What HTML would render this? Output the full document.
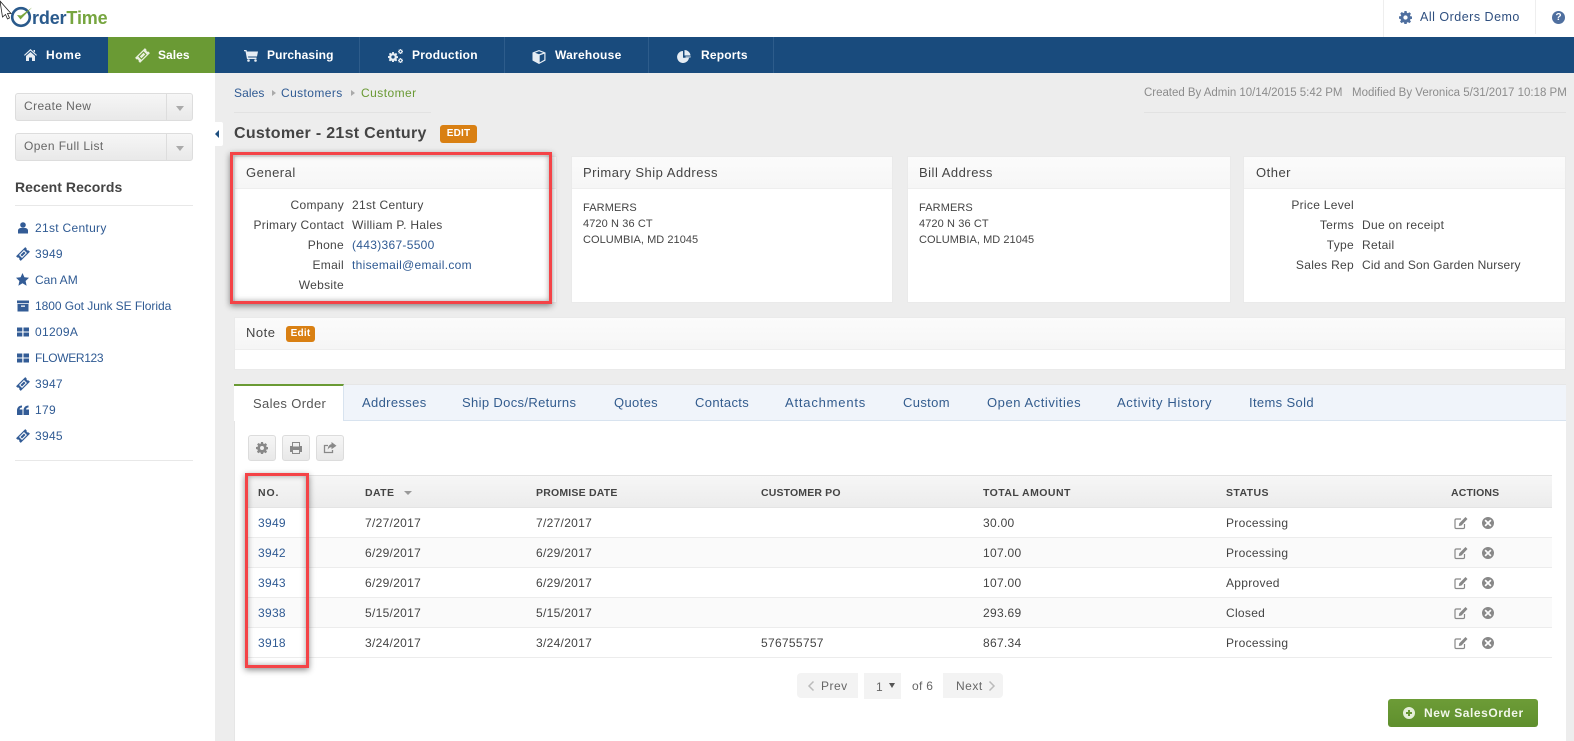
<!DOCTYPE html>
<html lang="en"><head><meta charset="utf-8"><title>Customer - 21st Century</title>
<style>
*{box-sizing:border-box}
html,body{margin:0;padding:0}
body{position:relative;width:1574px;height:741px;overflow:hidden;background:#ededed;font:12px/16px "Liberation Sans",sans-serif;color:#444;letter-spacing:.3px}
.a,.t{position:absolute}
.t{white-space:nowrap}
.r{text-align:right;width:112px}
.l{color:#2f5a93}
.nav{color:#fff;font-weight:bold;font-size:12px;letter-spacing:.55px}
.ico{position:absolute;fill:#335c96}
.wi{fill:#e6edf4}
.sep{position:absolute;top:37px;width:1px;height:36px;background:#2d5c8b}
.panel{position:absolute;top:156px;height:147px;background:#fff;border:1px solid #eaeaea}
.ph{position:absolute;left:0;right:0;top:0;height:32px;background:linear-gradient(#fbfbfb,#f6f6f6);border-bottom:1px solid #eee}
.h{font-size:13px;color:#444;letter-spacing:.5px}
.b{font-size:11px;letter-spacing:.1px;line-height:16px}
.tab{color:#335c8e;font-size:13px;letter-spacing:.35px}
.th{font-weight:bold;font-size:10.5px;color:#444;letter-spacing:.4px}
.rw{position:absolute;left:248px;width:1304px;height:1px;background:#ececec}
.tint{position:absolute;left:248px;width:1304px;height:29px;background:#fafafa}
.tb{position:absolute;top:435px;width:28px;height:26px;border:1px solid #dcdcdc;border-radius:3px;background:linear-gradient(#f6f6f6,#e8e8e8)}
.dd{position:absolute;left:15px;width:178px;height:28px;border:1px solid #ddd;border-radius:3px;background:linear-gradient(#f6f6f6,#e9e9e9)}
.dd i{position:absolute;right:25px;top:0;width:1px;height:26px;background:#ddd}
.dd b{position:absolute;right:8px;top:12px;border:4.5px solid transparent;border-top:5px solid #aaa;border-bottom:0}
.red{position:absolute;border:3px solid #f44347;box-shadow:0 2px 6px rgba(0,0,0,.45),inset 0 0 6px rgba(0,0,0,.35)}
.pg{position:absolute;top:673px;height:25px;background:#f3f3f3}
</style></head><body>
<svg width="0" height="0" style="position:absolute"><defs>
<symbol id="tk" viewBox="0 0 14 14"><g transform="rotate(-45 7 7)"><path fill-rule="evenodd" d="M.5 3.700h13v2a1.400 1.400 0 0 0 0 2.600v2H.5v-2a1.400 1.400 0 0 0 0-2.600zM3.500 4.900v4.200h7V4.900zM4.500 5.900h5v2.200h-5z"/></g></symbol>
<symbol id="gr" viewBox="0 0 12 12"><path d="M0 1.500h5.300v4H0zM6.500 1.500H12v4H6.500zM0 6.500h5.300v4H0zM6.500 6.500H12v4H6.500z"/></symbol>
<symbol id="gear" viewBox="0 0 14 14"><path fill-rule="evenodd" d="M5.800 0h2.400l.3 1.900 1.100.5 1.600-1.100 1.700 1.700-1.100 1.600.5 1.100 1.900.3v2.400l-1.900.3-.5 1.100 1.100 1.600-1.700 1.700-1.600-1.100-1.100.5-.3 1.900H5.800l-.3-1.900-1.100-.5-1.600 1.100-1.700-1.700 1.100-1.600-.5-1.100L0 8.200V5.800l1.900-.3.5-1.100-1.100-1.600L3 1.100l1.600 1.100 1.100-.5zM7 4.700a2.300 2.300 0 1 0 0 4.600 2.300 2.300 0 0 0 0-4.600z"/></symbol>
<symbol id="ed" viewBox="0 0 14 14"><path fill="none" stroke="#888" stroke-width="1.200" d="M10.500 8v3.200c0 .8-.5 1.300-1.300 1.300H2.300c-.8 0-1.300-.5-1.300-1.300V4.300C1 3.500 1.500 3 2.300 3H7"/><path fill="#888" d="M11.500 1 13.500 3 7.500 9.500 4.800 10 5.300 7.300z"/></symbol>
<symbol id="x" viewBox="0 0 14 14"><path fill="#888" fill-rule="evenodd" d="M7 1a6 6 0 1 0 0 12A6 6 0 0 0 7 1zM4.700 3.500 7 5.800l2.300-2.300 1.200 1.200L8.200 7l2.300 2.300-1.200 1.200L7 8.200l-2.300 2.300-1.200-1.200L5.800 7 3.500 4.700z"/></symbol>
</defs></svg>

<!-- top bar -->
<div class="a" style="left:0;top:0;width:1574px;height:37px;background:#fff"></div>
<svg class="a" style="left:0;top:0" width="40" height="30" viewBox="0 0 40 30"><circle cx="21" cy="17" r="8.800" fill="none" stroke="#2a5a8c" stroke-width="2.600"/><path d="M17 15l3.500 4.500L32 7.500l-11 8z" fill="#7aa63e"/><path d="M0 1 11 13.500H7.500L9.500 18 7.500 19 5.500 14.500 2.500 17z" fill="#fff" stroke="#222" stroke-width=".8"/></svg>
<div class="t" style="left:32px;top:6px;font-size:18px;line-height:24px;font-weight:bold;letter-spacing:-.15px;color:#2a5a8c">rder<span style="color:#76a53f">Time</span></div>
<div class="a" style="left:1383px;top:0;width:1px;height:37px;background:#eee"></div>
<div class="a" style="left:1535px;top:0;width:1px;height:34px;background:#eee"></div>
<svg class="ico" style="left:1399px;top:11px;fill:#4f6f9f" width="13" height="13"><use href="#gear"/></svg>
<div class="t" style="left:1420px;top:9px;color:#2f4f7f;font-size:12.5px;letter-spacing:.5px">All Orders Demo</div>
<div class="a" style="left:1552px;top:11px;width:13px;height:13px;border-radius:50%;background:#4f6f9f;color:#fff;font:bold 10px/13px 'Liberation Sans',sans-serif;text-align:center;letter-spacing:0">?</div>

<!-- nav -->
<div class="a" style="left:0;top:37px;width:1574px;height:36px;background:#194b7d"></div>
<div class="a" style="left:108px;top:37px;width:107px;height:36px;background:#6a9a34"></div>
<div class="sep" style="left:359px"></div><div class="sep" style="left:504px"></div><div class="sep" style="left:648px"></div><div class="sep" style="left:773px"></div>
<svg class="ico wi" style="left:24px;top:49px" width="13" height="12" viewBox="0 0 13 12"><path d="M6.500 0 13 6l-.8.800-5.700-5.200L.8 6.800 0 6zM2 7l4.500-4L11 7v5H8V8.500H5V12H2zM9.500 1H11v2.500L9.500 2.200z"/></svg>
<div class="t nav" style="left:46px;top:47px">Home</div>
<svg class="ico" style="left:135px;top:48px;fill:#e9f0df" width="15" height="15"><use href="#tk"/></svg>
<div class="t nav" style="left:158px;top:47px;letter-spacing:.05px">Sales</div>
<svg class="ico wi" style="left:244px;top:50px" width="14" height="12" viewBox="0 0 14 12"><path d="M0 0h2.500l.4 1.500H14l-1 5H4l.2 1H12.500V9H3L1.500 1.200H0z"/><circle cx="4.500" cy="10.500" r="1.300"/><circle cx="11.500" cy="10.500" r="1.300"/></svg>
<div class="t nav" style="left:267px;top:47px;letter-spacing:.12px">Purchasing</div>
<svg class="ico wi" style="left:388px;top:49px" width="15" height="14" viewBox="0 0 15 14"><use href="#gear" width="10" height="10" x="0" y="3"/><use href="#gear" width="5" height="5" x="10" y="0"/><use href="#gear" width="5" height="5" x="10" y="9"/></svg>
<div class="t nav" style="left:412px;top:47px;letter-spacing:.25px">Production</div>
<svg class="ico wi" style="left:532px;top:50px" width="14" height="14" viewBox="0 0 14 14"><path d="M7 0 13.500 2.500v8L7 14 .5 10.500v-8zM7 1.200 3 2.700 7 4.200l4-1.500zM7.700 5.400v7l4.600-2.600V3.700z" fill-rule="evenodd"/></svg>
<div class="t nav" style="left:555px;top:47px;letter-spacing:.25px">Warehouse</div>
<svg class="ico wi" style="left:677px;top:50px" width="14" height="13" viewBox="0 0 14 13"><path d="M6 1a6 6 0 1 0 6 6.800H6zM7.500 0v5.500H13.500A6 6 0 0 0 7.500 0zM8.500 6.500H14l-.6 1H8.500z"/></svg>
<div class="t nav" style="left:701px;top:47px;letter-spacing:.2px">Reports</div>

<!-- sidebar -->
<div class="a" style="left:0;top:73px;width:215px;height:668px;background:#fff"></div>
<div class="a" style="left:215px;top:122px;width:8px;height:24px;background:#fff;border-radius:0 2px 2px 0"></div>
<div class="a" style="left:215px;top:130px;border:4px solid transparent;border-right:4px solid #1d4f80;border-left:0"></div>
<div class="dd" style="top:93px"><i></i><b></b></div>
<div class="t" style="left:24px;top:98px;color:#666;letter-spacing:.4px">Create New</div>
<div class="dd" style="top:133px"><i></i><b></b></div>
<div class="t" style="left:24px;top:138px;color:#666;letter-spacing:.4px">Open Full List</div>
<div class="t" style="left:15px;top:179px;font-size:14px;font-weight:bold;color:#444;letter-spacing:.05px">Recent Records</div>
<div class="a" style="left:15px;top:205px;width:178px;height:1px;background:#e8e8e8"></div>
<div class="a" style="left:15px;top:460px;width:178px;height:1px;background:#e8e8e8"></div>

<svg class="ico" style="left:17px;top:222px" width="12" height="12" viewBox="0 0 12 12"><circle cx="6" cy="3" r="2.800"/><path d="M1 11.500V8.500C1 7 2.500 6 4 6h4c1.500 0 3 1 3 2.500v3z"/></svg>
<div class="t l" style="left:35px;top:220px">21st Century</div>
<svg class="ico" style="left:16px;top:247px" width="14" height="14"><use href="#tk"/></svg>
<div class="t l" style="left:35px;top:246px">3949</div>
<svg class="ico" style="left:16px;top:273px" width="13" height="13" viewBox="0 0 13 13"><path d="M6.500 0 8.400 4.300 13 4.800 9.600 8l1 4.700L6.500 10.300 2.400 12.700l1-4.700L0 4.800l4.600-.5z"/></svg>
<div class="t l" style="left:35px;top:272px;letter-spacing:0">Can AM</div>
<svg class="ico" style="left:17px;top:300px" width="12" height="12" viewBox="0 0 12 12"><path fill-rule="evenodd" d="M0 .5h12v2.700H0zM.5 4H11.500v7.500H.5zM4 5.500V6.700H8V5.500z"/></svg>
<div class="t l" style="left:35px;top:298px;letter-spacing:-.05px">1800 Got Junk SE Florida</div>
<svg class="ico" style="left:17px;top:326px" width="12" height="12"><use href="#gr"/></svg>
<div class="t l" style="left:35px;top:324px">01209A</div>
<svg class="ico" style="left:17px;top:352px" width="12" height="12"><use href="#gr"/></svg>
<div class="t l" style="left:35px;top:350px;letter-spacing:-.35px">FLOWER123</div>
<svg class="ico" style="left:16px;top:377px" width="14" height="14"><use href="#tk"/></svg>
<div class="t l" style="left:35px;top:376px">3947</div>
<svg class="ico" style="left:17px;top:405px" width="12" height="11" viewBox="0 0 12 11"><path d="M0 5.500C0 2.500 2 .5 5 .5v2c-1.500 0-2.400.8-2.400 2H5.500V10H0zM6.500 5.500c0-3 2-5 5-5v2c-1.500 0-2.400.8-2.400 2H12V10H6.500z"/></svg>
<div class="t l" style="left:35px;top:402px">179</div>
<svg class="ico" style="left:16px;top:429px" width="14" height="14"><use href="#tk"/></svg>
<div class="t l" style="left:35px;top:428px">3945</div>

<!-- content header -->
<div class="t l" style="left:234px;top:85px;letter-spacing:.1px">Sales</div>
<div class="a" style="left:272px;top:90px;border:3.5px solid transparent;border-left:4px solid #aaa;border-right:0"></div>
<div class="t l" style="left:281px;top:85px;letter-spacing:.4px">Customers</div>
<div class="a" style="left:351px;top:90px;border:3.5px solid transparent;border-left:4px solid #aaa;border-right:0"></div>
<div class="t" style="left:361px;top:85px;color:#6a9a34;letter-spacing:.45px">Customer</div>
<div class="a" style="left:234px;top:112px;width:197px;height:1px;background:#e2e2e2"></div>
<div class="t" style="left:1144px;top:85px;color:#8c8c8c;font-size:11.5px;letter-spacing:-.03px">Created By Admin 10/14/2015 5:42 PM</div>
<div class="t" style="left:1352px;top:85px;color:#8c8c8c;font-size:11.5px;letter-spacing:0">Modified By Veronica 5/31/2017 10:18 PM</div>
<div class="a" style="left:1144px;top:112px;width:422px;height:1px;background:#e2e2e2"></div>
<div class="t" style="left:234px;top:124px;font-size:16px;line-height:20px;font-weight:bold;color:#444;letter-spacing:.3px">Customer - 21st Century</div>
<div class="a" style="left:440px;top:125px;width:37px;height:18px;border-radius:3px;background:#d98013;color:#fff;font:bold 10px/18px 'Liberation Sans',sans-serif;text-align:center;letter-spacing:.2px">EDIT</div>

<!-- panels -->
<div class="panel" style="left:234px;width:323px"><div class="ph"></div></div>
<div class="panel" style="left:571px;width:322px"><div class="ph"></div></div>
<div class="panel" style="left:907px;width:324px"><div class="ph"></div></div>
<div class="panel" style="left:1243px;width:323px"><div class="ph"></div></div>
<div class="t h" style="left:246px;top:165px">General</div>
<div class="t h" style="left:583px;top:165px">Primary Ship Address</div>
<div class="t h" style="left:919px;top:165px">Bill Address</div>
<div class="t h" style="left:1256px;top:165px">Other</div>

<div class="t r" style="left:232px;top:197px">Company</div><div class="t" style="left:352px;top:197px">21st Century</div>
<div class="t r" style="left:232px;top:217px">Primary Contact</div><div class="t" style="left:352px;top:217px">William P. Hales</div>
<div class="t r" style="left:232px;top:237px">Phone</div><div class="t l" style="left:352px;top:237px">(443)367-5500</div>
<div class="t r" style="left:232px;top:257px">Email</div><div class="t l" style="left:352px;top:257px">thisemail@email.com</div>
<div class="t r" style="left:232px;top:277px">Website</div>

<div class="t b" style="left:583px;top:200px">FARMERS</div><div class="t b" style="left:583px;top:216px">4720 N 36 CT</div><div class="t b" style="left:583px;top:232px;letter-spacing:.05px">COLUMBIA, MD 21045</div>
<div class="t b" style="left:919px;top:200px">FARMERS</div><div class="t b" style="left:919px;top:216px">4720 N 36 CT</div><div class="t b" style="left:919px;top:232px;letter-spacing:.05px">COLUMBIA, MD 21045</div>

<div class="t r" style="left:1242px;top:197px">Price Level</div>
<div class="t r" style="left:1242px;top:217px">Terms</div><div class="t" style="left:1362px;top:217px">Due on receipt</div>
<div class="t r" style="left:1242px;top:237px">Type</div><div class="t" style="left:1362px;top:237px">Retail</div>
<div class="t r" style="left:1242px;top:257px">Sales Rep</div><div class="t" style="left:1362px;top:257px;letter-spacing:.15px">Cid and Son Garden Nursery</div>

<div class="panel" style="left:234px;top:317px;width:1332px;height:53px"><div class="ph"></div></div>
<div class="t h" style="left:246px;top:325px">Note</div>
<div class="a" style="left:286px;top:326px;width:29px;height:16px;border-radius:3px;background:#d98013;color:#fff;font:bold 10px/16px 'Liberation Sans',sans-serif;text-align:center;letter-spacing:.2px">Edit</div>

<!-- tabs panel -->
<div class="a" style="left:234px;top:384px;width:1332px;height:357px;background:#fff;border-left:1px solid #e6e6e6"></div>
<div class="a" style="left:234px;top:384px;width:1332px;height:37px;background:#f0f4fa;border-bottom:1px solid #d8e3ef;border-top:1px solid #e6e6e6"></div>
<div class="a" style="left:234px;top:384px;width:110px;height:37px;background:#fff;border-top:2px solid #6a9a34;border-right:1px solid #d8e3ef"></div>
<div class="t tab" style="left:253px;top:396px;color:#555">Sales Order</div>
<div class="t tab" style="left:362px;top:395px">Addresses</div>
<div class="t tab" style="left:462px;top:395px">Ship Docs/Returns</div>
<div class="t tab" style="left:614px;top:395px">Quotes</div>
<div class="t tab" style="left:695px;top:395px">Contacts</div>
<div class="t tab" style="left:785px;top:395px;letter-spacing:.8px">Attachments</div>
<div class="t tab" style="left:903px;top:395px">Custom</div>
<div class="t tab" style="left:987px;top:395px;letter-spacing:.55px">Open Activities</div>
<div class="t tab" style="left:1117px;top:395px;letter-spacing:.62px">Activity History</div>
<div class="t tab" style="left:1249px;top:395px">Items Sold</div>

<div class="tb" style="left:248px"></div><div class="tb" style="left:282px"></div><div class="tb" style="left:316px"></div>
<svg class="ico" style="left:256px;top:442px;fill:#888" width="12" height="12"><use href="#gear"/></svg>
<svg class="ico" style="left:289px;top:441px;fill:#888" width="14" height="14" viewBox="0 0 14 14"><path fill-rule="evenodd" d="M3 1h8v4h2v6h-2v2H3v-2H1V5h2zM4 2v3.500h6V2zM4 9v3h6V9z"/></svg>
<svg class="ico" style="left:323px;top:441px" width="14" height="14" viewBox="0 0 14 14"><path fill="none" stroke="#888" stroke-width="1.300" d="M9.500 9v2.500h-8v-7H5"/><path fill="#888" d="M8.500 1 13.500 4.700 8.500 8.300V6.200C6.800 6.200 5.500 7 4.800 8.700 4.800 5.500 6.300 3.500 8.500 3.300z"/></svg>

<!-- table -->
<div class="a" style="left:248px;top:475px;width:1304px;height:33px;background:linear-gradient(#f6f6f6,#ececec);border-top:1px solid #e2e2e2;border-bottom:1px solid #e4e4e4"></div>
<div class="t th" style="left:258px;top:485px;letter-spacing:.9px">NO.</div>
<div class="t th" style="left:365px;top:485px">DATE</div>
<div class="a" style="left:404px;top:491px;border:4px solid transparent;border-top:4px solid #999;border-bottom:0"></div>
<div class="t th" style="left:536px;top:485px;letter-spacing:.2px">PROMISE DATE</div>
<div class="t th" style="left:761px;top:485px;letter-spacing:.15px">CUSTOMER PO</div>
<div class="t th" style="left:983px;top:485px;letter-spacing:.45px">TOTAL AMOUNT</div>
<div class="t th" style="left:1226px;top:485px">STATUS</div>
<div class="t th" style="left:1451px;top:485px;letter-spacing:.15px">ACTIONS</div>

<div class="tint" style="top:538px"></div><div class="tint" style="top:598px"></div>
<div class="rw" style="top:537px"></div><div class="rw" style="top:567px"></div><div class="rw" style="top:597px"></div><div class="rw" style="top:627px"></div><div class="rw" style="top:657px"></div>

<div class="t l" style="left:258px;top:515px">3949</div><div class="t" style="left:365px;top:515px">7/27/2017</div><div class="t" style="left:536px;top:515px">7/27/2017</div><div class="t" style="left:983px;top:515px">30.00</div><div class="t" style="left:1226px;top:515px">Processing</div>
<div class="t l" style="left:258px;top:545px">3942</div><div class="t" style="left:365px;top:545px">6/29/2017</div><div class="t" style="left:536px;top:545px">6/29/2017</div><div class="t" style="left:983px;top:545px">107.00</div><div class="t" style="left:1226px;top:545px">Processing</div>
<div class="t l" style="left:258px;top:575px">3943</div><div class="t" style="left:365px;top:575px">6/29/2017</div><div class="t" style="left:536px;top:575px">6/29/2017</div><div class="t" style="left:983px;top:575px">107.00</div><div class="t" style="left:1226px;top:575px">Approved</div>
<div class="t l" style="left:258px;top:605px">3938</div><div class="t" style="left:365px;top:605px">5/15/2017</div><div class="t" style="left:536px;top:605px">5/15/2017</div><div class="t" style="left:983px;top:605px">293.69</div><div class="t" style="left:1226px;top:605px">Closed</div>
<div class="t l" style="left:258px;top:635px">3918</div><div class="t" style="left:365px;top:635px">3/24/2017</div><div class="t" style="left:536px;top:635px">3/24/2017</div><div class="t" style="left:761px;top:635px">576755757</div><div class="t" style="left:983px;top:635px">867.34</div><div class="t" style="left:1226px;top:635px">Processing</div>

<svg class="a" style="left:1454px;top:516px" width="14" height="14"><use href="#ed"/></svg><svg class="a" style="left:1481px;top:516px" width="14" height="14"><use href="#x"/></svg>
<svg class="a" style="left:1454px;top:546px" width="14" height="14"><use href="#ed"/></svg><svg class="a" style="left:1481px;top:546px" width="14" height="14"><use href="#x"/></svg>
<svg class="a" style="left:1454px;top:576px" width="14" height="14"><use href="#ed"/></svg><svg class="a" style="left:1481px;top:576px" width="14" height="14"><use href="#x"/></svg>
<svg class="a" style="left:1454px;top:606px" width="14" height="14"><use href="#ed"/></svg><svg class="a" style="left:1481px;top:606px" width="14" height="14"><use href="#x"/></svg>
<svg class="a" style="left:1454px;top:636px" width="14" height="14"><use href="#ed"/></svg><svg class="a" style="left:1481px;top:636px" width="14" height="14"><use href="#x"/></svg>

<!-- pagination -->
<div class="pg" style="left:797px;width:61px;border-radius:4px 0 0 4px"></div>
<div class="pg" style="left:864px;width:37px;height:26px"></div>
<div class="pg" style="left:943px;width:60px;border-radius:0 4px 4px 0"></div>
<svg class="a" style="left:807px;top:680px" width="8" height="12" viewBox="0 0 8 12"><path d="M6.500 1.500 2 6l4.500 4.500" fill="none" stroke="#bbb" stroke-width="1.500"/></svg>
<div class="t" style="left:821px;top:678px;color:#666;letter-spacing:.5px">Prev</div>
<div class="t" style="left:876px;top:679px;color:#666">1</div>
<div class="a" style="left:889px;top:683px;border:3.5px solid transparent;border-top:5px solid #555;border-bottom:0"></div>
<div class="t" style="left:912px;top:678px;color:#666">of 6</div>
<div class="t" style="left:956px;top:678px;color:#666;letter-spacing:.5px">Next</div>
<svg class="a" style="left:988px;top:680px" width="8" height="12" viewBox="0 0 8 12"><path d="M1.500 1.500 6 6l-4.500 4.500" fill="none" stroke="#bbb" stroke-width="1.500"/></svg>

<!-- new button -->
<div class="a" style="left:1388px;top:699px;width:150px;height:28px;border-radius:3px;background:linear-gradient(#6d9c37,#5f8f2d)"></div>
<svg class="a" style="left:1402px;top:706px" width="14" height="14" viewBox="0 0 14 14"><path fill="#e4eed8" fill-rule="evenodd" d="M7 1a6 6 0 1 0 0 12A6 6 0 0 0 7 1zM6 4h2v2h2v2H8v2H6V8H4V6h2z"/></svg>
<div class="t" style="left:1424px;top:705px;color:#f2f7ea;font-weight:bold;font-size:12px;letter-spacing:.55px">New SalesOrder</div>

<!-- annotation boxes -->
<div class="red" style="left:230px;top:152px;width:322px;height:152px"></div>
<div class="red" style="left:245px;top:473px;width:64px;height:195px"></div>
</body></html>
